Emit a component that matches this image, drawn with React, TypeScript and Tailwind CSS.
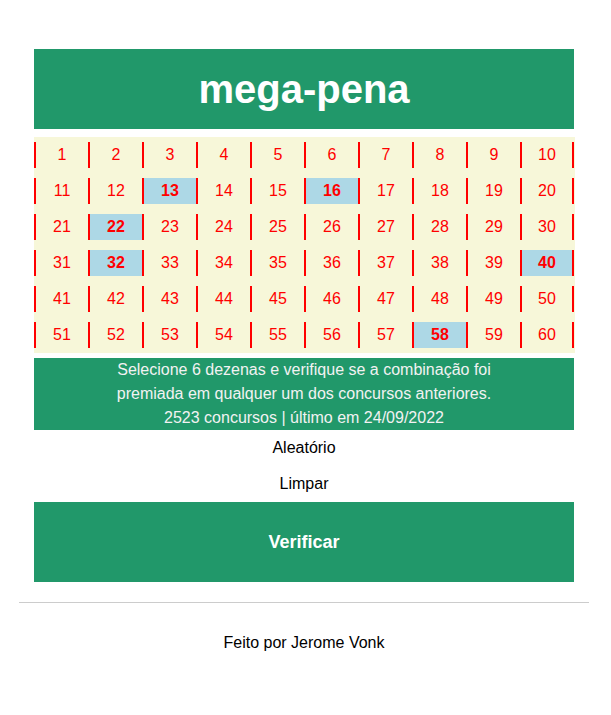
import { useState } from 'react'

const numbers = Array.from({ length: 60 }, (_, i) => i + 1)
const initialPicked = [13, 16, 22, 32, 40, 58]

export default function App() {
  const [picked, setPicked] = useState<number[]>(initialPicked)

  const toggle = (n: number) => {
    setPicked((prev) => (prev.includes(n) ? prev.filter((p) => p !== n) : prev.length < 6 ? [...prev, n] : prev))
  }

  return (
    <div className="min-h-screen bg-white font-['Liberation_Sans',Arial,sans-serif] text-black">
      <div className="ml-[34px] w-[540px] pt-[49px]">
        <header className="flex h-[80px] items-center justify-center bg-[#21986a]">
          <h1 className="text-[40px] font-bold leading-none text-white">mega-pena</h1>
        </header>

        <div className="mt-[8px] w-[541px] bg-[#f7f7d9] py-[5px]">
          <div className="grid grid-cols-10 gap-y-[10px] w-[540px]">
            {numbers.map((n) => {
              const on = picked.includes(n)
              const last = n % 10 === 0
              return (
                <button
                  key={n}
                  onClick={() => toggle(n)}
                  className={
                    'flex h-[26px] items-center justify-center border-l-2 border-[#ff0000] text-[16px] text-[#ff0000] ' +
                    (last ? 'border-r-2 ' : '') +
                    (on ? 'bg-[#add8e6] font-bold' : '')
                  }
                >
                  {n}
                </button>
              )
            })}
          </div>
        </div>

        <div className="mt-[5px] bg-[#21986a] text-center text-[16px] leading-[24px] text-[#f2f2f2]">
          <p>Selecione 6 dezenas e verifique se a combinação foi</p>
          <p>premiada em qualquer um dos concursos anteriores.</p>
          <p>2523 concursos | último em 24/09/2022</p>
        </div>

        <button className="block h-[36px] w-full text-center text-[16px]" onClick={() => setPicked([])}>
          Aleatório
        </button>
        <button className="block h-[36px] w-full text-center text-[16px]" onClick={() => setPicked([])}>
          Limpar
        </button>
        <button className="block h-[80px] w-full bg-[#21986a] text-center text-[18px] font-bold text-white">
          Verificar
        </button>
      </div>

      <hr className="ml-[19px] mt-[20px] w-[570px] border-t border-[#cccccc]" />

      <footer className="w-[608px] pt-[30px] text-center text-[16px] leading-[20px]">Feito por Jerome Vonk</footer>
    </div>
  )
}
